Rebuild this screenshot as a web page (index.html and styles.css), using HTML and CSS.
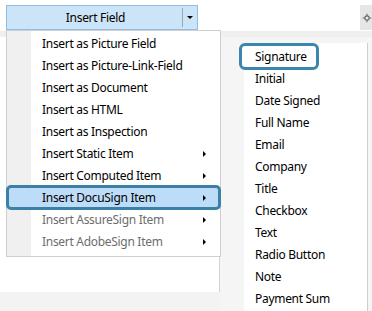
FILE: index.html
```html
<!DOCTYPE html>
<html>
<head>
<meta charset="utf-8">
<link rel="stylesheet" href="styles.css">
</head>
<body>
<div class="page">
  <div class="toolbar">
    <div class="split-btn">
      <span class="split-label">Insert Field</span>
      <span class="split-sep"></span>
      <span class="split-arrow"></span>
    </div>
    <div class="tool-icon">
      <svg width="14" height="14" viewBox="0 0 14 14"><circle cx="7" cy="7" r="3" fill="none" stroke="#666" stroke-width="1.5"/><path d="M7 1v3M7 10v3M1 7h3M10 7h3" stroke="#666" stroke-width="1.5"/></svg>
    </div>
  </div>
  <div class="band"></div>
  <div class="content">
    <div class="left-area"></div>
    <div class="gap-col"></div>
  </div>
  <div class="bottom-band"></div>

  <div class="menu menu-main">
    <div class="item">Insert as Picture Field</div>
    <div class="item">Insert as Picture-Link-Field</div>
    <div class="item">Insert as Document</div>
    <div class="item">Insert as HTML</div>
    <div class="item">Insert as Inspection</div>
    <div class="item sub">Insert Static Item</div>
    <div class="item sub">Insert Computed Item</div>
    <div class="item sub active">Insert DocuSign Item</div>
    <div class="item sub disabled">Insert AssureSign Item</div>
    <div class="item sub disabled">Insert AdobeSign Item</div>
  </div>

  <div class="menu menu-sub">
    <div class="item focus">Signature</div>
    <div class="item">Initial</div>
    <div class="item">Date Signed</div>
    <div class="item">Full Name</div>
    <div class="item">Email</div>
    <div class="item">Company</div>
    <div class="item">Title</div>
    <div class="item">Checkbox</div>
    <div class="item">Text</div>
    <div class="item">Radio Button</div>
    <div class="item">Note</div>
    <div class="item">Payment Sum</div>
  </div>
</div>
</body>
</html>
```
FILE: styles.css
```css
* { box-sizing: border-box; }
html, body { margin: 0; padding: 0; }
body {
  width: 372px;
  height: 311px;
  overflow: hidden;
  background: #fff;
  font-family: "Noto Sans", "Open Sans", sans-serif;
  font-size: 12px;
  letter-spacing: -0.3px;
  color: #000;
}
.page {
  position: relative;
  width: 372px;
  height: 311px;
  display: flex;
  flex-direction: column;
}
.toolbar {
  height: 31px;
  display: flex;
  align-items: flex-start;
  justify-content: space-between;
  padding: 5px 0 0 6px;
}
.split-btn {
  width: 192px;
  height: 25px;
  background: #cce4f7;
  border: 1px solid #8fbde8;
  display: flex;
  align-items: center;
}
.split-label {
  flex: 1;
  text-align: center;
  padding-left: 2px;
}
.split-sep {
  width: 1px;
  height: 19px;
  background: #9aa6b2;
}
.split-arrow {
  width: 14px;
  display: flex;
  justify-content: center;
}
.split-arrow::before {
  content: "";
  border-left: 3px solid transparent;
  border-right: 3px solid transparent;
  border-top: 3px solid #000;
}
.tool-icon {
  width: 12px;
  height: 25px;
  background: #e6e6e6;
  overflow: hidden;
  display: flex;
  align-items: center;
  padding-left: 2px;
}
.band {
  height: 6px;
  background: #efefef;
}
.content {
  flex: 1;
  display: flex;
}
.left-area {
  width: 220px;
  border-right: 1px solid #d4d4d4;
  background: #fff;
}
.gap-col {
  flex: 1;
  background: #f5f5f5;
}
.bottom-band {
  position: absolute;
  left: 0;
  top: 292px;
  width: 220px;
  height: 19px;
  background: #f3f3f3;
}
.menu {
  position: absolute;
  background: #fff;
  border: 1px solid #cfcfcf;
}
.menu-main {
  left: 6px;
  top: 30px;
  width: 215px;
  padding: 2px 0 3px 0;
  background: linear-gradient(to right, #f0f0f0 0, #f0f0f0 24px, #fff 24px);
}
.menu-sub {
  left: 244px;
  top: 43px;
  width: 124px;
  height: 280px;
  padding: 3px 0 0 0;
  border-top: none;
  border-left: none;
}
.item {
  position: relative;
  height: 22px;
  line-height: 22px;
  white-space: nowrap;
}
.menu-main .item { padding-left: 35px; }
.menu-sub .item { padding-left: 11px; }
.item.sub::after {
  content: "";
  position: absolute;
  left: 196px;
  top: 8px;
  border-top: 3px solid transparent;
  border-bottom: 3px solid transparent;
  border-left: 3px solid #000;
}
.item.disabled { color: #6d6d6d; }
.item.active {
  margin: 0 -1px 0 -1px;
  padding-left: 33px;
  height: 25px;
  line-height: 20px;
  margin-top: -2px;
  margin-bottom: -1px;
  background: #bcdcf8;
  border: 3px solid #3c7fa7;
  border-radius: 5px;
}
.item.active::after { left: 194px; top: 7px; }
.item.focus {
  margin-left: -5px;
  padding-left: 13px;
  width: 80px;
  height: 27px;
  line-height: 22px;
  margin-top: -3px;
  margin-bottom: -2px;
  border: 3px solid #3c86ad;
  border-radius: 6px;
  background: #fff;
}
```
